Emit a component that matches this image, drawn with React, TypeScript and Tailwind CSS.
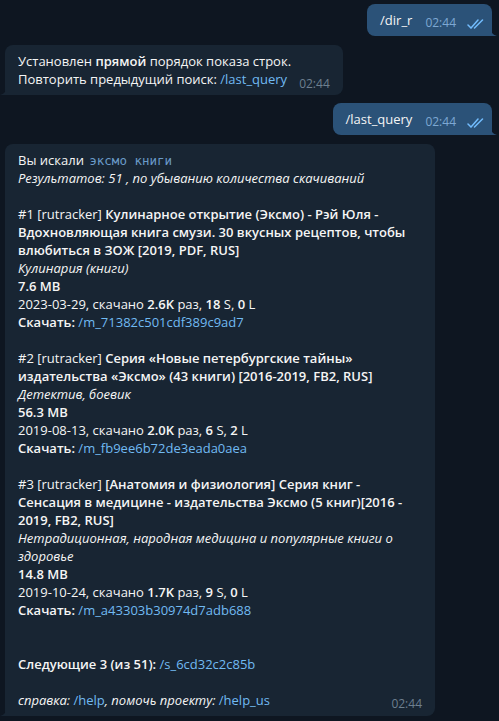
import type { ReactNode } from 'react';

const L = ({ children }: { children?: ReactNode }) => (
  <div className="h-[18px] whitespace-nowrap">{children ?? '\u00a0'}</div>
);
const B = ({ children }: { children: ReactNode }) => <span className="font-semibold">{children}</span>;
const I = ({ children }: { children: ReactNode }) => <span className="italic">{children}</span>;
const A = ({ children }: { children: ReactNode }) => <span className="text-[#71baf2] not-italic">{children}</span>;

function Checks() {
  return (
    <svg width="17" height="10" viewBox="0 0 17 10" fill="none" stroke="#72bcfd" strokeWidth="1.5" strokeLinecap="round">
      <path d="M1 6l3 3L11 1" />
      <path d="M7.5 9L15.5 1" />
    </svg>
  );
}

function Outgoing({ text }: { text: string }) {
  return (
    <div className="relative self-end mr-[7px] flex h-[32px] items-start rounded-[8px] rounded-br-none bg-[#2b5278] pl-[13px] pr-[8px] pt-[7px] leading-[18px]">
      <span className="text-[13px] text-[#f5f5f5]">{text}</span>
      <span className="ml-[13px] mt-[6px] text-[12px] leading-[12px] text-[#7da8d3]">02:44</span>
      <span className="ml-[11px] mt-[8px] flex">
        <Checks />
      </span>
      <svg className="absolute bottom-0 right-[-5px]" width="6" height="8" viewBox="0 0 6 8">
        <path d="M0 0 C0 5 2 7 6 8 L0 8 Z" fill="#2b5278" />
      </svg>
    </div>
  );
}

function Tail() {
  return (
    <svg className="absolute bottom-0 left-[-5px]" width="6" height="8" viewBox="0 0 6 8">
      <path d="M6 0 C6 5 4 7 0 8 L6 8 Z" fill="#182533" />
    </svg>
  );
}

export default function App() {
  return (
    <div
      className="w-[499px] h-[721px] overflow-hidden bg-[#0e1621] flex flex-col pt-[4px] text-[13px] text-[#f5f5f5]"
      style={{ fontFamily: '"Open Sans", "Noto Sans", sans-serif' }}
    >
      <Outgoing text="/dir_r" />

      <div className="relative self-start ml-[5px] mt-[9px] rounded-[8px] rounded-bl-none bg-[#182533] pl-[13px] pr-[13px] pt-[7px] pb-[7px] leading-[18px]">
        <L>
          Установлен <B>прямой</B> порядок показа строк.
        </L>
        <L>
          Повторить предыдущий поиск: <A>/last_query</A>
          <span className="ml-[12px] inline-block align-[-4px] text-[12px] text-[#6d7f8f]">02:44</span>
        </L>
        <Tail />
      </div>

      <div className="mt-[8px] flex flex-col">
        <Outgoing text="/last_query" />
      </div>

      <div className="relative self-start ml-[5px] mt-[9px] w-[430px] rounded-[8px] rounded-bl-none bg-[#182533] pl-[13px] pr-[13px] pt-[7px] pb-[7px] leading-[18px]">
        <L>
          Вы искали{' '}
          <span
            className="ml-[2px] text-[12.5px] text-[#6a9bc8]"
            style={{ fontFamily: '"DejaVu Sans Mono", monospace' }}
          >
            эксмо книги
          </span>
        </L>
        <L>
          <I>Результатов: 51 , по убыванию количества скачиваний</I>
        </L>
        <L />
        <L>
          #1 [rutracker] <B>Кулинарное открытие (Эксмо) - Рэй Юля -</B>
        </L>
        <L>
          <B>Вдохновляющая книга смузи. 30 вкусных рецептов, чтобы</B>
        </L>
        <L>
          <B>влюбиться в ЗОЖ [2019, PDF, RUS]</B>
        </L>
        <L>
          <I>Кулинария (книги)</I>
        </L>
        <L>
          <B>7.6 MB</B>
        </L>
        <L>
          2023-03-29, скачано <B>2.6K</B> раз, <B>18</B> S, <B>0</B> L
        </L>
        <L>
          <B>Скачать:</B> <A>/m_71382c501cdf389c9ad7</A>
        </L>
        <L />
        <L>
          #2 [rutracker] <B>Серия «Новые петербургские тайны»</B>
        </L>
        <L>
          <B>издательства «Эксмо» (43 книги) [2016-2019, FB2, RUS]</B>
        </L>
        <L>
          <I>Детектив, боевик</I>
        </L>
        <L>
          <B>56.3 MB</B>
        </L>
        <L>
          2019-08-13, скачано <B>2.0K</B> раз, <B>6</B> S, <B>2</B> L
        </L>
        <L>
          <B>Скачать:</B> <A>/m_fb9ee6b72de3eada0aea</A>
        </L>
        <L />
        <L>
          #3 [rutracker] <B>[Анатомия и физиология] Серия книг -</B>
        </L>
        <L>
          <B>Сенсация в медицине - издательства Эксмо (5 книг)[2016 -</B>
        </L>
        <L>
          <B>2019, FB2, RUS]</B>
        </L>
        <L>
          <I>Нетрадиционная, народная медицина и популярные книги о</I>
        </L>
        <L>
          <I>здоровье</I>
        </L>
        <L>
          <B>14.8 MB</B>
        </L>
        <L>
          2019-10-24, скачано <B>1.7K</B> раз, <B>9</B> S, <B>0</B> L
        </L>
        <L>
          <B>Скачать:</B> <A>/m_a43303b30974d7adb688</A>
        </L>
        <L />
        <L />
        <L>
          <B>Следующие 3 (из 51):</B> <A>/s_6cd32c2c85b</A>
        </L>
        <L />
        <L>
          <I>
            справка: <A>/help</A>, помочь проекту: <A>/help_us</A>
          </I>
        </L>
        <span className="absolute right-[13px] bottom-[3px] text-[12px] leading-[18px] text-[#6d7f8f]">02:44</span>
        <Tail />
      </div>
    </div>
  );
}
